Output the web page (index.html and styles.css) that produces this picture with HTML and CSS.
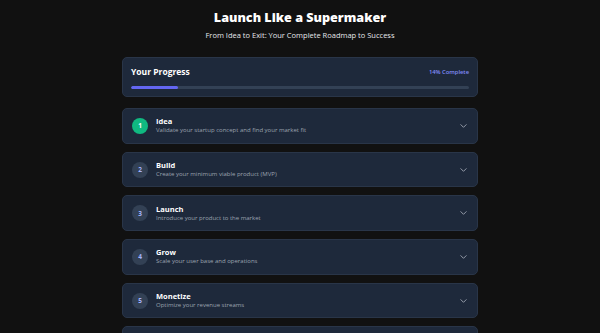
FILE: index.html
```html
<!DOCTYPE html>
<html lang="en">
<head>
    <meta charset="UTF-8">
    <meta name="viewport" content="width=device-width, initial-scale=1.0">
    <title>Launch Like a Supermaker</title>
    <link rel="stylesheet" href="styles.css">
</head>
<body>
    <div class="page">
        <header class="hero">
            <h1>Launch Like a Supermaker</h1>
            <p class="subtitle">From Idea to Exit: Your Complete Roadmap to Success</p>
        </header>

        <section class="progress-card">
            <div class="progress-head">
                <h2>Your Progress</h2>
                <span class="progress-label">14% Complete</span>
            </div>
            <div class="progress-track">
                <div class="progress-fill" style="width: 14%"></div>
            </div>
        </section>

        <div class="steps">
            <div class="step">
                <div class="step-num done">1</div>
                <div class="step-text">
                    <div class="step-title">Idea</div>
                    <div class="step-desc">Validate your startup concept and find your market fit</div>
                </div>
                <svg class="chevron" viewBox="0 0 10 6" width="7" height="4"><path d="M1 1l4 4 4-4" fill="none" stroke="currentColor" stroke-width="1.4" stroke-linecap="round" stroke-linejoin="round"/></svg>
            </div>
            <div class="step">
                <div class="step-num">2</div>
                <div class="step-text">
                    <div class="step-title">Build</div>
                    <div class="step-desc">Create your minimum viable product (MVP)</div>
                </div>
                <svg class="chevron" viewBox="0 0 10 6" width="7" height="4"><path d="M1 1l4 4 4-4" fill="none" stroke="currentColor" stroke-width="1.4" stroke-linecap="round" stroke-linejoin="round"/></svg>
            </div>
            <div class="step">
                <div class="step-num">3</div>
                <div class="step-text">
                    <div class="step-title">Launch</div>
                    <div class="step-desc">Introduce your product to the market</div>
                </div>
                <svg class="chevron" viewBox="0 0 10 6" width="7" height="4"><path d="M1 1l4 4 4-4" fill="none" stroke="currentColor" stroke-width="1.4" stroke-linecap="round" stroke-linejoin="round"/></svg>
            </div>
            <div class="step">
                <div class="step-num">4</div>
                <div class="step-text">
                    <div class="step-title">Grow</div>
                    <div class="step-desc">Scale your user base and operations</div>
                </div>
                <svg class="chevron" viewBox="0 0 10 6" width="7" height="4"><path d="M1 1l4 4 4-4" fill="none" stroke="currentColor" stroke-width="1.4" stroke-linecap="round" stroke-linejoin="round"/></svg>
            </div>
            <div class="step">
                <div class="step-num">5</div>
                <div class="step-text">
                    <div class="step-title">Monetize</div>
                    <div class="step-desc">Optimize your revenue streams</div>
                </div>
                <svg class="chevron" viewBox="0 0 10 6" width="7" height="4"><path d="M1 1l4 4 4-4" fill="none" stroke="currentColor" stroke-width="1.4" stroke-linecap="round" stroke-linejoin="round"/></svg>
            </div>
            <div class="step">
                <div class="step-num">6</div>
                <div class="step-text">
                    <div class="step-title">Scale</div>
                    <div class="step-desc">Expand your business to new heights</div>
                </div>
                <svg class="chevron" viewBox="0 0 10 6" width="7" height="4"><path d="M1 1l4 4 4-4" fill="none" stroke="currentColor" stroke-width="1.4" stroke-linecap="round" stroke-linejoin="round"/></svg>
            </div>
        </div>
    </div>
</body>
</html>
```

FILE: styles.css
```css
body {
    margin: 0;
    background-color: #111111;
    font-family: "Open Sans", Arial, sans-serif;
    color: #ffffff;
}
.page {
    width: 356px;
    margin: 0 auto;
}
.hero {
    text-align: center;
    padding-top: 10px;
}
.hero h1 {
    margin: 0;
    font-size: 12.6px;
    line-height: 16px;
    font-weight: 800;
}
.subtitle {
    margin: 4px 0 0;
    font-size: 7.5px;
    line-height: 10px;
    color: #e5e7eb;
}
.progress-card {
    margin-top: 17px;
    background-color: #1e293b;
    border: 1px solid #293548;
    border-radius: 5px;
    padding: 8px 8px 8px;
    height: 40px;
    box-sizing: border-box;
}
.progress-head {
    display: flex;
    justify-content: space-between;
    align-items: center;
}
.progress-head h2 {
    margin: 0;
    font-size: 8.5px;
    line-height: 12px;
    font-weight: 700;
}
.progress-label {
    font-size: 5.8px;
    color: #818cf8;
    font-weight: 600;
}
.progress-track {
    margin-top: 8px;
    height: 3px;
    background-color: #334155;
    border-radius: 2px;
    overflow: hidden;
}
.progress-fill {
    height: 100%;
    background-color: #6366f1;
    border-radius: 2px;
}
.steps {
    display: flex;
    flex-direction: column;
    gap: 8px;
    margin-top: 11px;
}
.step {
    display: flex;
    align-items: center;
    height: 35.7px;
    box-sizing: border-box;
    padding: 0 9px;
    background-color: #1e293b;
    border: 1px solid #293548;
    border-radius: 5px;
    flex-shrink: 0;
}
.step-num {
    width: 16px;
    height: 16px;
    border-radius: 50%;
    background-color: #334155;
    color: #a5b4fc;
    font-size: 6.5px;
    font-weight: 700;
    display: flex;
    align-items: center;
    justify-content: center;
    flex-shrink: 0;
}
.step-num.done {
    background-color: #10b981;
    color: #ffffff;
}
.step-text {
    flex: 1;
    margin-left: 8px;
}
.step-title {
    font-size: 7.5px;
    line-height: 9px;
    font-weight: 700;
}
.step-desc {
    font-size: 6px;
    line-height: 8px;
    color: #9ca3af;
}
.chevron {
    color: #9ca3af;
    margin-right: 1px;
}
```
